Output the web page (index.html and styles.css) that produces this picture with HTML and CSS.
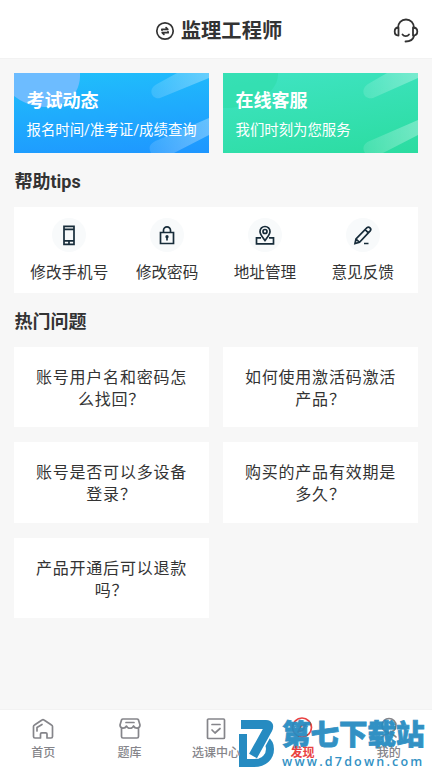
FILE: index.html
```html
<!DOCTYPE html>
<html lang="zh-CN">
<head>
<meta charset="utf-8">
<title>监理工程师</title>
<link rel="stylesheet" href="styles.css">
</head>
<body>
<div class="app">
  <header class="header">
    <svg class="switch" viewBox="0 0 20 20"><circle cx="10" cy="10" r="8.200"/><path d="M6.800 8.300h6l-1.700-1.700M13.200 11.700h-6l1.700 1.700M7 8.300v1M13 11.700v-1"/></svg>
    <h1>监理工程师</h1>
    <svg class="support" viewBox="0 0 26 26"><path d="M5 10C5 5 8.300 1.500 13 1.500S21 5 21 10M21 18C20 22 17 23.500 12.500 23.500M9.500 16.500C11 18.700 14.500 18.700 16 16.500"/><path d="M5.500 9.500v8C3 17.500 1.700 16 1.700 13.500S3 9.500 5.500 9.500zM20 9.500v8c2.500 0 4.300-1.500 4.300-4s-1.800-4-4.300-4z"/></svg>
  </header>
  <main class="main">
    <section class="banners">
      <div class="banner blue">
        <svg class="shine" viewBox="0 0 195 80"><defs><linearGradient id="ray" x1="0" x2="1"><stop offset="0" stop-color="#fff" stop-opacity=".12"/><stop offset="1" stop-color="#fff" stop-opacity=".32"/></linearGradient></defs><path class="corner" d="M0 0H66C67 21 52 35 30 34Q12 33 0 23Z"/><path fill="url(#ray)" d="M163 0H195V5L146 25C138 27 133 16 143 11ZM195 45V62L160 80H137C133 73 138 69 144 67Z"/></svg>
        <h2>考试动态</h2><p>报名时间/准考证/成绩查询</p>
      </div>
      <div class="banner green">
        <svg class="shine" viewBox="0 0 195 80"><path class="corner" d="M0 0H55C56 21 28 35 0 35Z"/><path fill="url(#ray)" d="M164 0H195V5L150 25C140 27 137 16 145 11ZM195 47V62L160 80H142C138 74 142 69 149 67Z"/></svg>
        <h2>在线客服</h2><p>我们时刻为您服务</p>
      </div>
    </section>
    <h2 class="section-title">帮助tips</h2>
    <section class="tips">
      <div class="tip"><span class="disc"><svg viewBox="0 0 24 24"><path d="M7 3.300h10v18H7zM7 6.300h10M7 17.800h10M12 17.800v3.500"/></svg></span>修改手机号</div>
      <div class="tip"><span class="disc"><svg viewBox="0 0 24 24"><path d="M5.500 9.500h13V20.500h-13zM8.500 9.500V7.300a3.500 3.500 0 0 1 7 0v2.200M12 14v3.500"/><circle cx="12" cy="13.700" r=".8"/></svg></span>修改密码</div>
      <div class="tip"><span class="disc"><svg viewBox="0 0 24 24"><path d="M12 17.500C9.500 14 7 11.400 7 8.500a5 5 0 0 1 10 0c0 2.900-2.500 5.500-5 9zM8 14.800H3.500v6h17v-6H16"/><circle cx="12" cy="8.500" r="2"/></svg></span>地址管理</div>
      <div class="tip"><span class="disc"><svg viewBox="0 0 24 24"><path d="M4 20.500l1-4.500L16 4.700q1.500-1.200 3 .2t.2 3L8.500 19.300zM14.200 6.700l3.400 3.400M5 16l3.500 3.300M13 20.500h4.500"/></svg></span>意见反馈</div>
    </section>
    <h2 class="section-title">热门问题</h2>
    <section class="questions">
      <div class="question">账号用户名和密码怎<br>么找回？</div>
      <div class="question">如何使用激活码激活<br>产品？</div>
      <div class="question">账号是否可以多设备<br>登录？</div>
      <div class="question">购买的产品有效期是<br>多久？</div>
      <div class="question">产品开通后可以退款<br>吗？</div>
    </section>
  </main>
  <nav class="nav">
    <div class="tab"><svg viewBox="0 0 24 24"><path d="M2.500 9.500Q2.500 8.500 3.500 8L11 3q1-.7 2 0l7.500 5q1 .5 1 1.500v10q0 1.500-1.500 1.500h-4v-4q0-1.200-1.200-1.200h-4Q9.500 15.800 9.500 17v4h-5.500q-1.500 0-1.500-1.500zM6 14v-3.500l5-3"/></svg><span>首页</span></div>
    <div class="tab"><svg viewBox="0 0 24 24"><path d="M5 2h14q1 0 1.500 1L22 8c0 4-5 4-6.500 1-1 3-6 3-7 0C7 12 2 12 2 8l1.500-5Q4 2 5 2zM3.500 11v8.500Q3.500 21 5 21h14q1.500 0 1.500-1.500V11M8 5.500h8"/></svg><span>题库</span></div>
    <div class="tab"><svg viewBox="0 0 24 24"><rect x="3.500" y="2" width="17" height="19.500" rx="1"/><path d="M8 7.500h8M8 13l3 3 5-4.500"/></svg><span>选课中心</span></div>
    <div class="tab active"><svg viewBox="0 0 24 24"><circle cx="12" cy="10.500" r="9.500"/><path d="M8 15l3-6 5-2-3 6z"/></svg><span>发现</span></div>
    <div class="tab"><svg viewBox="0 0 24 24"><circle cx="12" cy="8.500" r="7"/><path d="M5 20q7-7 14 0"/></svg><span>我的</span></div>
  </nav>
  <div class="watermark">
    <svg class="mark" viewBox="0 0 38 50"><path class="mark-d" d="M5 16V45H16C27 45 32 38 32 31Q32 25 27 22"/><path class="mark-edge" d="M3 6.500H28Q32 6.500 30 11L15 38"/><path class="mark-seven" d="M3 6.500H28Q32 6.500 30 11L15 38"/></svg>
    <div class="mark-text"><strong>第七下载站</strong><span>www.d7down.com</span></div>
  </div>
</div>
</body>
</html>
```
FILE: styles.css
```css
* { box-sizing: border-box; }
body { margin: 0; background: #f7f7f7; color: #333; font-family: Roboto, "Noto Sans CJK SC", sans-serif; }
h1, h2, p { margin: 0; }
svg { display: block; fill: none; stroke: currentColor; stroke-width: 1.7; stroke-linecap: round; stroke-linejoin: round; }
.app { position: relative; display: flex; flex-direction: column; height: 768px; overflow: hidden; }
.header { position: relative; display: flex; align-items: center; justify-content: center; gap: 6px; height: 59px; padding: 3px 0 0 5px; background: #fff; border-bottom: 1px solid #f2f2f2; }
.header h1 { font-size: 20.300px; line-height: 28px; }
.switch { width: 20px; height: 20px; }
.support { position: absolute; top: 17.500px; right: 13px; width: 26px; height: 26px; stroke-width: 1.8; }
.main { flex: 1; padding: 14px 14px 0; }
.banners { display: grid; grid-template-columns: 195px 195px; gap: 14px; }
.banner { position: relative; height: 80px; padding: 16px 12.500px; overflow: hidden; color: #fff; white-space: nowrap; }
.blue { background: linear-gradient(175deg, #20c0fb, #1e96ff); }
.green { background: linear-gradient(170deg, #40e4c4, #2bdca0); }
.shine { position: absolute; inset: 0; width: 195px; height: 80px; stroke: none; }
.blue .corner { fill: #6dbcff; }
.green .corner { fill: #2bdca6; fill-opacity: .5; }
.banner h2, .banner p { position: relative; }
.banner h2 { font-size: 18px; line-height: 24px; }
.banner p { margin-top: 8px; font-size: 14.400px; line-height: 20px; }
.section-title { margin-top: 16px; padding-left: .5px; font-size: 18px; line-height: 26px; }
.tips { display: grid; grid-template-columns: repeat(4, 97.800px); justify-content: center; height: 86px; margin-top: 12px; padding-top: 11px; background: #fff; }
.tip { display: flex; flex-direction: column; align-items: center; gap: 10px; font-size: 15.600px; line-height: 22px; }
.disc { display: grid; place-items: center; width: 34px; height: 34px; border-radius: 50%; background: #f8fafb; }
.disc svg { width: 24px; height: 24px; color: #172c3a; stroke-width: 1.7; stroke-linecap: butt; stroke-linejoin: miter; }
.questions { display: grid; grid-template-columns: 195px 195px; gap: 15px 14px; margin-top: 12px; }
.question { display: flex; align-items: center; justify-content: center; height: 80.300px; padding-top: 4px; background: #fff; font-size: 16px; letter-spacing: .8px; line-height: 22px; text-align: center; }
.nav { display: grid; grid-template-columns: repeat(5, 1fr); height: 59px; padding-top: 7px; background: #fff; border-top: 1px solid #f2f2f2; }
.tab { display: flex; flex-direction: column; align-items: center; gap: 3px; color: #85858a; font-size: 12px; font-weight: 500; line-height: 18px; }
.tab svg { width: 24px; height: 24px; }
.tab span { position: relative; z-index: 2; }
.active { color: #e94242; font-weight: 700; }
.watermark { position: absolute; z-index: 1; left: 238px; top: 718px; display: flex; gap: 6px; color: #268bc1; }
.mark { width: 38px; height: 50px; stroke-linecap: butt; stroke-linejoin: miter; }
.mark-d { stroke-width: 8; }
.mark-edge { stroke: #fff; stroke-width: 12; }
.mark-seven { stroke-width: 9; }
.mark-text { display: flex; flex-direction: column; opacity: .94; }
.mark-text strong { font-size: 28.500px; line-height: 36px; font-weight: 900; -webkit-text-stroke: .8px #268bc1; white-space: nowrap; }
.mark-text span { font-family: "Open Sans", sans-serif; font-size: 12.500px; line-height: 14px; font-weight: 600; letter-spacing: 2.200px; margin-top: 1px; }
```
